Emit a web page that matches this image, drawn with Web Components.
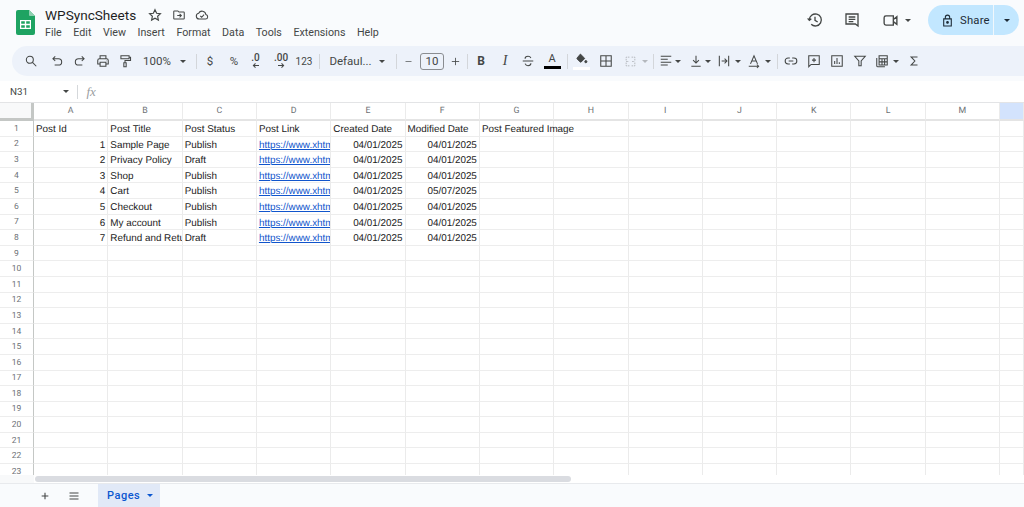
<!DOCTYPE html>
<html>
<head>
<meta charset="utf-8">
<title>WPSyncSheets</title>
<style>
  html, body { margin: 0; height: 100%; overflow: hidden; }
  body { display: flex; flex-direction: column; width: 1024px; height: 507px; background: #fff; font-family: Roboto, "Liberation Sans", sans-serif; }
</style>
</head>
<body>
<title-bar>
  <span slot="title">WPSyncSheets</span>
  <span>File</span><span>Edit</span><span>View</span><span>Insert</span><span>Format</span><span>Data</span><span>Tools</span><span>Extensions</span><span>Help</span>
</title-bar>
<tool-bar></tool-bar>
<formula-bar>N31</formula-bar>
<sheet-grid></sheet-grid>
<sheet-tabs>Pages</sheet-tabs>

<script>
const ICONS = {
  search: '<circle cx="10" cy="10" r="6"/><path d="M14.5 14.5 21 21"/>',
  undo: '<path d="M9 4 5 8l4 4M5 8h9.5a5.5 5.5 0 0 1 0 11H8"/>',
  redo: '<path d="m15 4 4 4-4 4M19 8H9.5a5.5 5.5 0 0 0 0 11H16"/>',
  print: '<path d="M7 8V3h10v5M7 17H3v-6a3 3 0 0 1 3-3h12a3 3 0 0 1 3 3v6h-4"/><path d="M7 14h10v7H7z"/><path d="M17.5 11.5h.5"/>',
  paint: '<path d="M5 3h14v5H5zM19 5.500h2.500V11H12v4"/><path d="M10 15h4v7h-4z"/>',
  minus: '<path d="M4 12h16"/>',
  plus: '<path d="M12 4v16M4 12h16"/>',
  strike: '<path d="M3 12h18M17 7c-1-2-3-3-5-3-3 0-5 1.500-5 4M7 16.500C8 19 10 20 12 20c3 0 5-1.500 5-4"/>',
  fill: '<path d="m10 2 8 8-6.500 6.500a1.500 1.500 0 0 1-2 0L4 11a1.500 1.500 0 0 1 0-2z" fill="currentColor"/><circle cx="20" cy="16" r="2" fill="currentColor"/>',
  borders: '<path d="M3 3h18v18H3zM12 3v18M3 12h18"/>',
  merge: '<path d="M4 10V4h6M14 4h6v6M4 14v6h6M14 20h6v-6M4 12h5M15 12h5" stroke-dasharray="3 1.500"/>',
  align: '<path d="M3 4h18M3 9h12M3 14h18M3 19h12"/>',
  valign: '<path d="M12 3v12M7 10.500l5 5 5-5M4 21h16"/>',
  wrap: '<path d="M4 3v18M20 3v18M8 12h8M13 8l4 4-4 4"/>',
  rotate: '<path d="M6 17 12 3l6 14M8 12h8M3 21h17M17 18l3 3-3 3"/>',
  link: '<path d="M10 7H7a5 5 0 0 0 0 10h3M14 7h3a5 5 0 0 1 0 10h-3M8 12h8"/>',
  comment: '<path d="M3 3h18v15H7l-4 4zM12 7v7M8.500 10.500h7"/>',
  chart: '<path d="M3 3h18v18H3zM8 17v-5M12 17V7M16 17v-3"/>',
  filter: '<path d="M3 4h18l-7 8v8h-4v-8z"/>',
  functions: '<path d="M3 7v13a2 2 0 0 0 2 2h12M7 3h14v16H7zM7 8h14M7 13.500h14M12 8v11M16.500 8v11"/>',
  sigma: '<path d="M18 5H7l6.500 7L7 19h11"/>',
  star: '<path d="m12 3 2.800 6 6.500.800-4.800 4.400 1.300 6.500L12 17.500l-5.800 3.200 1.300-6.500-4.800-4.400 6.500-.800z"/>',
  folder: '<path d="M3 6a1 1 0 0 1 1-1h6l2 2h8a1 1 0 0 1 1 1v10a1 1 0 0 1-1 1H4a1 1 0 0 1-1-1zM9 13h7M13 10l3 3-3 3"/>',
  cloud: '<path d="M7 19a5 5 0 0 1-.700-9.900 6.500 6.500 0 0 1 12.300 2A4 4 0 0 1 18 19zM9 13.500l2.500 2.500 4-4.500"/>',
  history: '<path d="M3.500 12a9 9 0 1 1 2.800 6.500M1 9.500l2.500 3 3-2.500M12 7v5.500l4 2.500"/>',
  chat: '<path d="M3 3h18v18l-4-3H3zM7 7.500h10M7 11h10M7 14.500h7"/>',
  video: '<path d="M3 8a2.500 2.500 0 0 1 2.500-2.500H16V18.500H5.500A2.500 2.500 0 0 1 3 16zM16 10.500l5-4v11l-5-4z"/>',
  lock: '<path d="M5 9h14v13H5zM8 9V6a4 4 0 0 1 8 0v3"/><circle cx="12" cy="15.500" r="1.500" fill="currentColor"/>',
  menu: '<path d="M3 6h18M3 12h18M3 18h18"/>'
};

class UiIcon extends HTMLElement {
  connectedCallback() {
    const size = this.getAttribute('size') || 14;
    const sw = this.getAttribute('sw') || 1.8;
    this.attachShadow({ mode: 'open' }).innerHTML = `
      <style>
        :host { display: inline-flex; flex: none; width: ${size}px; height: ${size}px; color: inherit; }
        svg { width: 100%; height: 100%; overflow: visible; fill: none; stroke: currentColor; stroke-width: ${sw}; }
      </style>
      <svg viewBox="0 0 24 24">${ICONS[this.getAttribute('name')] || ''}</svg>`;
  }
}
customElements.define('ui-icon', UiIcon);

class CaretMark extends HTMLElement {
  connectedCallback() {
    this.attachShadow({ mode: 'open' }).innerHTML = `
      <style>
        :host { display: inline-block; flex: none; width: 0; height: 0; border: 3.2px solid transparent; border-top: 3.6px solid currentColor; border-bottom: 0; }
      </style>`;
  }
}
customElements.define('caret-mark', CaretMark);

class TitleBar extends HTMLElement {
  constructor() {
    super();
    this.attachShadow({ mode: 'open' }).innerHTML = `
      <style>
        :host { display: flex; flex: none; height: 46px; background: #f9fbfd; color: #444746; align-items: flex-start; }
        .logo { margin: 10px 10px 0 16px; width: 19px; height: 25px; flex: none; }
        .doc { flex: none; display: flex; flex-direction: column; }
        .name { display: flex; align-items: center; height: 16px; margin-top: 7px; }
        .title { font-size: 13.600px; color: #1f1f1f; width: 103px; white-space: nowrap; }
        .name ui-icon { margin-right: 9.500px; color: #444746; }
        .menu { display: flex; font-size: 10.700px; color: #444746; margin-top: 2px; height: 15px; align-items: center; }
        ::slotted(span) { margin-right: 11.500px; white-space: nowrap; }
        .right { margin-left: auto; display: flex; align-items: center; height: 30px; margin-top: 5px; margin-right: 5px; }
        .video { margin-left: 22.500px; }
        .vcaret { margin-left: 6px; }
        .share { margin-left: 17px; display: flex; align-items: center; width: 91px; height: 30px; border-radius: 15px; background: #c2e7ff; color: #1d2b36; font-size: 11.300px; }
        .share .main { display: flex; align-items: center; width: 66px; height: 100%; border-right: 1px solid #f0f7fc; box-sizing: border-box; padding-left: 13px; gap: 6px; flex: none; letter-spacing: .2px; }
        .share .drop { flex: 1; display: flex; justify-content: center; }
      </style>
      <svg class="logo" viewBox="0 0 19 25">
        <path d="M2 0h11l6 6v17a2 2 0 0 1-2 2H2a2 2 0 0 1-2-2V2a2 2 0 0 1 2-2z" fill="#1ea362"/>
        <path d="M13 0l6 6h-5a1 1 0 0 1-1-1z" fill="#8ed1b1"/>
        <path d="M4 10h11v9H4z" fill="#fff"/>
        <path d="M5.200 11.200h3.600v2.600H5.200zM10.200 11.200h3.600v2.600h-3.600zM5.200 15.200h3.600v2.600H5.200zM10.200 15.200h3.600v2.600h-3.600z" fill="#1ea362"/>
      </svg>
      <div class="doc">
        <div class="name">
          <span class="title"><slot name="title"></slot></span>
          <ui-icon name="star" size="14" sw="2"></ui-icon>
          <ui-icon name="folder" size="14" sw="1.800"></ui-icon>
          <ui-icon name="cloud" size="14" sw="1.800"></ui-icon>
        </div>
        <div class="menu"><slot></slot></div>
      </div>
      <div class="right">
        <ui-icon name="history" size="16" sw="2"></ui-icon>
        <ui-icon name="chat" size="16" sw="2" style="margin-left:21px"></ui-icon>
        <ui-icon class="video" name="video" size="17" sw="1.900"></ui-icon>
        <caret-mark class="vcaret"></caret-mark>
        <div class="share">
          <div class="main"><ui-icon name="lock" size="13" sw="2"></ui-icon><span>Share</span></div>
          <div class="drop"><caret-mark></caret-mark></div>
        </div>
      </div>`;
  }
}
customElements.define('title-bar', TitleBar);

// [kind, centre x, width]
const TOOLS = [
  ['search', 31], ['undo', 57], ['redo', 80], ['print', 103], ['paint', 125],
  ['t:100%', 157, 30], ['caret', 183], ['sep', 196.5],
  ['t:$', 210, 8], ['t:%', 234, 11], ['dec:.0:l', 255.500], ['dec:.00:r', 281], ['t:123', 304, 17, 'small'], ['sep', 319],
  ['t:Defaul...', 350.500, 41], ['caret', 382], ['sep', 396.500],
  ['minus', 408, 9], ['box:10', 432, 24], ['plus', 455, 11], ['sep', 467.500],
  ['b:B', 481, 9], ['i:I', 505, 9], ['strike', 528], ['color:A', 552, 17], ['sep', 567],
  ['fillc', 581.500, 17], ['borders', 606], ['merge', 630, 13, 'gray'], ['caret', 645, 6, 'gray'], ['sep', 653],
  ['align', 665.500], ['caret', 678], ['valign', 695.500], ['caret', 708], ['wrap', 724], ['caret', 738],
  ['rotate', 754], ['caret', 768], ['sep', 777],
  ['link', 791], ['comment', 814], ['chart', 837], ['filter', 860], ['functions', 882], ['caret', 895.500], ['sigma', 914]
];

class ToolBar extends HTMLElement {
  item(kind, w, cls) {
    if (kind === 'sep') return '<span class="sep"></span>';
    if (kind === 'caret') return '<caret-mark></caret-mark>';
    if (kind === 'fillc') return '<span class="stack"><ui-icon name="fill" size="13"></ui-icon><i class="bar white"></i></span>';
    const [type, text, dir] = kind.split(':');
    if (type === 't') return `<span class="${cls || ''}">${text}</span>`;
    if (type === 'b') return `<b>${text}</b>`;
    if (type === 'i') return `<em>${text}</em>`;
    if (type === 'box') return `<span class="box">${text}</span>`;
    if (type === 'color') return `<span class="stack"><span class="a">${text}</span><i class="bar"></i></span>`;
    if (type === 'dec') {
      const d = dir === 'l' ? 'M11 5H3M6 2 3 5l3 3' : 'M1 5h8M6 2l3 3-3 3';
      return `<span class="dec"><span>${text}</span><svg viewBox="0 0 12 10" width="9" height="7"><path d="${d}" fill="none" stroke="currentColor" stroke-width="1.500"/></svg></span>`;
    }
    return `<ui-icon name="${kind}" size="${w || 14}"></ui-icon>`;
  }

  connectedCallback() {
    let right = 12;
    const html = TOOLS.map(([kind, c, width, cls]) => {
      const w = width || (kind === 'sep' ? 1 : kind === 'caret' ? 6 : 14);
      const gap = c - w / 2 - right;
      right = c + w / 2;
      return `<span class="it ${cls === 'gray' ? 'gray' : ''}" style="width:${w}px;margin-left:${gap}px">${this.item(kind, w, cls)}</span>`;
    }).join('');
    this.attachShadow({ mode: 'open' }).innerHTML = `
      <style>
        :host { display: block; flex: none; height: 35px; background: #f9fbfd; color: #444746; }
        .pill { display: flex; align-items: center; height: 30px; margin-left: 12px; background: #edf2fa; border-radius: 15px 0 0 15px; font-size: 11.500px; }
        .it { display: flex; flex: none; justify-content: center; align-items: center; white-space: nowrap; height: 30px; }
        .gray { color: #b4b8bd; }
        .sep { width: 1px; height: 15px; background: #d3d6da; display: block; }
        .small { font-size: 10px; }
        b { font-size: 12px; font-weight: 700; }
        em { font: italic 500 14px "Liberation Serif", serif; }
        .box { flex: none; display: block; box-sizing: border-box; width: 24px; height: 17px; line-height: 15px; border: 1px solid #8a8d91; border-radius: 3px; text-align: center; font-size: 11.500px; }
        .stack { display: flex; flex-direction: column; align-items: center; }
        .a { font-size: 11px; line-height: 11px; }
        .bar { display: block; width: 17px; height: 3px; background: #000; margin-top: 2px; }
        .bar.white { background: #fff; margin-top: 1px; }
        .dec { display: flex; flex-direction: column; align-items: center; font-size: 10px; font-weight: 500; line-height: 8px; }
      </style>
      <div class="pill">${html}</div>`;
  }
}
customElements.define('tool-bar', ToolBar);

class FormulaBar extends HTMLElement {
  constructor() {
    super();
    this.attachShadow({ mode: 'open' }).innerHTML = `
      <style>
        :host { display: flex; flex: none; align-items: center; height: 21px; box-sizing: border-box; background: #fff; color: #444746; font-size: 9.800px; }
        .name { width: 53px; padding-left: 10px; flex: none; }
        caret-mark { flex: none; margin-right: 7.500px; }
        .sep { width: 1px; height: 14px; background: #d5d8db; margin-right: 9px; }
        .fx { font: italic 13px "Liberation Serif", serif; color: #9a9da1; }
      </style>
      <span class="name"><slot></slot></span>
      <caret-mark></caret-mark>
      <span class="sep"></span>
      <span class="fx">fx</span>`;
  }
}
customElements.define('formula-bar', FormulaBar);

const LINK = 'https://www.xhtm';
const ROWS = [
  ['Post Id', 'Post Title', 'Post Status', 'Post Link', 'Created Date', 'Modified Date', 'Post Featured Image'],
  [1, 'Sample Page', 'Publish', LINK, '04/01/2025', '04/01/2025'],
  [2, 'Privacy Policy', 'Draft', LINK, '04/01/2025', '04/01/2025'],
  [3, 'Shop', 'Publish', LINK, '04/01/2025', '04/01/2025'],
  [4, 'Cart', 'Publish', LINK, '04/01/2025', '05/07/2025'],
  [5, 'Checkout', 'Publish', LINK, '04/01/2025', '04/01/2025'],
  [6, 'My account', 'Publish', LINK, '04/01/2025', '04/01/2025'],
  [7, 'Refund and Retu', 'Draft', LINK, '04/01/2025', '04/01/2025']
];
const COLS = 'ABCDEFGHIJKLMN'.split('');

class SheetGrid extends HTMLElement {
  connectedCallback() {
    let html = '<div class="corner"></div>';
    COLS.forEach(c => { html += `<div class="ch ${c === 'N' ? 'sel' : ''}">${c === 'N' ? '' : c}</div>`; });
    for (let r = 1; r <= 23; r++) {
      html += `<div class="rh">${r}</div>`;
      const row = ROWS[r - 1] || [];
      COLS.forEach((c, i) => {
        const v = row[i];
        if (v === undefined) { html += '<div class="c"></div>'; return; }
        const right = r > 1 && (i === 0 || i > 3);
        const over = r === 1 && i === 6;
        const link = r > 1 && i === 3;
        html += `<div class="c ${right ? 'num' : ''} ${over ? 'over' : ''}">${link ? `<a>${v}</a>` : v}</div>`;
      });
    }
    this.attachShadow({ mode: 'open' }).innerHTML = `
      <style>
        :host { display: block; flex: 1; min-height: 0; overflow: hidden; background: #fff; border-top: 1px solid #e3e4e6; }
        .grid { display: grid; grid-template-columns: 34px repeat(13, 74.32px) 1fr; grid-template-rows: 18px repeat(23, 15.6px); font: 9.900px "Liberation Sans", Arial, sans-serif; color: #222; text-rendering: geometricPrecision; }
        .grid > div { box-sizing: border-box; border-right: 1px solid #ebebeb; border-bottom: 1px solid #ededed; }
        .corner { background: #f8f9fa; border-right: 3px solid #c4c7c5 !important; border-bottom: 3px solid #c4c7c5 !important; }
        .ch, .rh { color: #6d7175; display: flex; align-items: center; justify-content: center; font-family: Roboto, "Liberation Sans", sans-serif; }
        .ch { font-size: 8.800px; background: #fff; border-bottom: 2px solid #e4e4e4 !important; }
        .ch.sel { background: #d3e3fd; }
        .rh { font-size: 8.500px; padding-top: 1px; border-right: 1px solid #c4c7c5 !important; }
        .c { padding: 2px 2px 0; line-height: 13.600px; white-space: nowrap; overflow: hidden; }
        .c.num { text-align: right; }
        .c.over { overflow: visible; }
        a { color: #1155cc; text-decoration: underline; }
      </style>
      <div class="grid">${html}</div>`;
  }
}
customElements.define('sheet-grid', SheetGrid);

class SheetTabs extends HTMLElement {
  constructor() {
    super();
    this.attachShadow({ mode: 'open' }).innerHTML = `
      <style>
        :host { display: block; flex: none; color: #444746; }
        .scroll { height: 8px; background: #fff; display: flex; align-items: center; }
        .gutter { width: 34px; height: 100%; background: #f8f9fa; flex: none; }
        .thumb { margin-left: 1px; width: 536px; height: 6px; background: #dadce1; border-radius: 3px; }
        .bar { display: flex; align-items: center; height: 24px; background: #f9fbfd; border-top: 1px solid #e8eaed; box-sizing: border-box; }
        .tab { display: flex; align-items: center; margin-left: 18px; width: 62px; height: 23px; box-sizing: border-box; padding-left: 9px; background: #e1e9f7; color: #0b57d0; font-size: 11px; font-weight: 500; letter-spacing: .5px; }
        .tab caret-mark { margin-left: 7px; }
        .add { margin-left: 40px; }
        .all { margin-left: 18px; }
      </style>
      <div class="scroll"><div class="gutter"></div><div class="thumb"></div></div>
      <div class="bar">
        <ui-icon class="add" name="plus" size="10" sw="2.600"></ui-icon>
        <ui-icon class="all" name="menu" size="12" sw="2.200"></ui-icon>
        <div class="tab"><slot></slot><caret-mark></caret-mark></div>
      </div>`;
  }
}
customElements.define('sheet-tabs', SheetTabs);
</script>
</body>
</html>
